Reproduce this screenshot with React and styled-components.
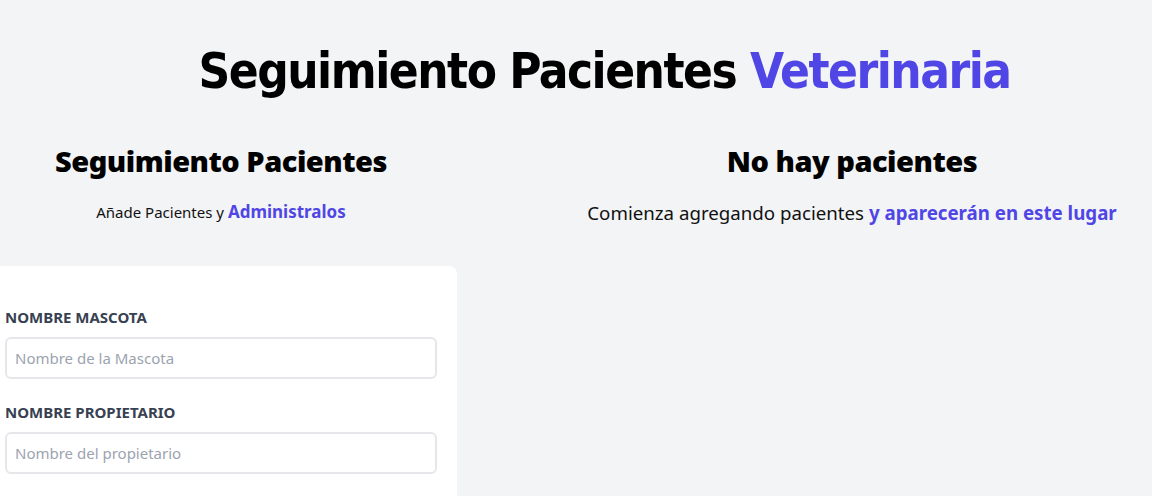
import React from "react";
import styled, { createGlobalStyle } from "styled-components";

const GlobalStyle = createGlobalStyle`
  * { box-sizing: border-box; }
  html, body {
    margin: 0;
    background: #f3f4f6;
    font-family: "Noto Sans", "Open Sans", sans-serif;
    overflow: hidden;
  }
`;

const Page = styled.div`
  width: 1239px;
  margin-left: -15px;
  padding-top: 43px;
`;

const Title = styled.h1`
  margin: 0;
  text-align: center;
  font-family: "DejaVu Sans Condensed", "DejaVu Sans", sans-serif;
  font-weight: 700;
  font-size: 49px;
  line-height: 1.2;
  color: #000;
  letter-spacing: -1.5px;
`;

const Accent = styled.span`
  color: #4f46e5;
  font-weight: ${(p) => (p.$bold ? 700 : "inherit")};
  font-size: ${(p) => p.$size || "inherit"};
`;

const Columns = styled.div`
  display: flex;
  margin-top: 41px;
`;

const FormColumn = styled.div`
  width: 472px;
`;

const ListColumn = styled.div`
  flex: 1;
  margin-left: 23px;
`;

const Heading = styled.h2`
  margin: 0;
  text-align: center;
  font-size: 29px;
  line-height: 36px;
  font-weight: 900;
  letter-spacing: -0.5px;
  color: #000;
`;

const Lead = styled.p`
  margin: 21px 0 43px;
  text-align: center;
  font-size: ${(p) => p.$size};
  color: #111;
`;

const Card = styled.form`
  background: #fff;
  border-radius: 8px;
  padding: 41px 20px;
`;

const Field = styled.div`
  margin-bottom: 23px;
`;

const Label = styled.label`
  display: block;
  font-size: 15px;
  font-weight: 700;
  text-transform: uppercase;
  color: #374151;
  margin-bottom: 10px;
`;

const Input = styled.input`
  display: block;
  width: 100%;
  height: 42px;
  border: 2px solid #e5e7eb;
  border-radius: 6px;
  padding: 8px;
  font-family: inherit;
  font-size: 15px;
  outline: none;
  &::placeholder {
    color: #9ca3af;
  }
`;

export default function App() {
  return (
    <>
      <GlobalStyle />
      <Page>
        <Title>
          Seguimiento Pacientes <Accent>Veterinaria</Accent>
        </Title>
        <Columns>
          <FormColumn>
            <Heading>Seguimiento Pacientes</Heading>
            <Lead $size="15px">
              Añade Pacientes y{" "}
              <Accent $bold $size="17px">
                Administralos
              </Accent>
            </Lead>
            <Card>
              <Field>
                <Label htmlFor="mascota">Nombre Mascota</Label>
                <Input id="mascota" type="text" placeholder="Nombre de la Mascota" />
              </Field>
              <Field>
                <Label htmlFor="propietario">Nombre Propietario</Label>
                <Input id="propietario" type="text" placeholder="Nombre del propietario" />
              </Field>
            </Card>
          </FormColumn>
          <ListColumn>
            <Heading>No hay pacientes</Heading>
            <Lead $size="18.7px">
              Comienza agregando pacientes <Accent $bold>y aparecerán en este lugar</Accent>
            </Lead>
          </ListColumn>
        </Columns>
      </Page>
    </>
  );
}
